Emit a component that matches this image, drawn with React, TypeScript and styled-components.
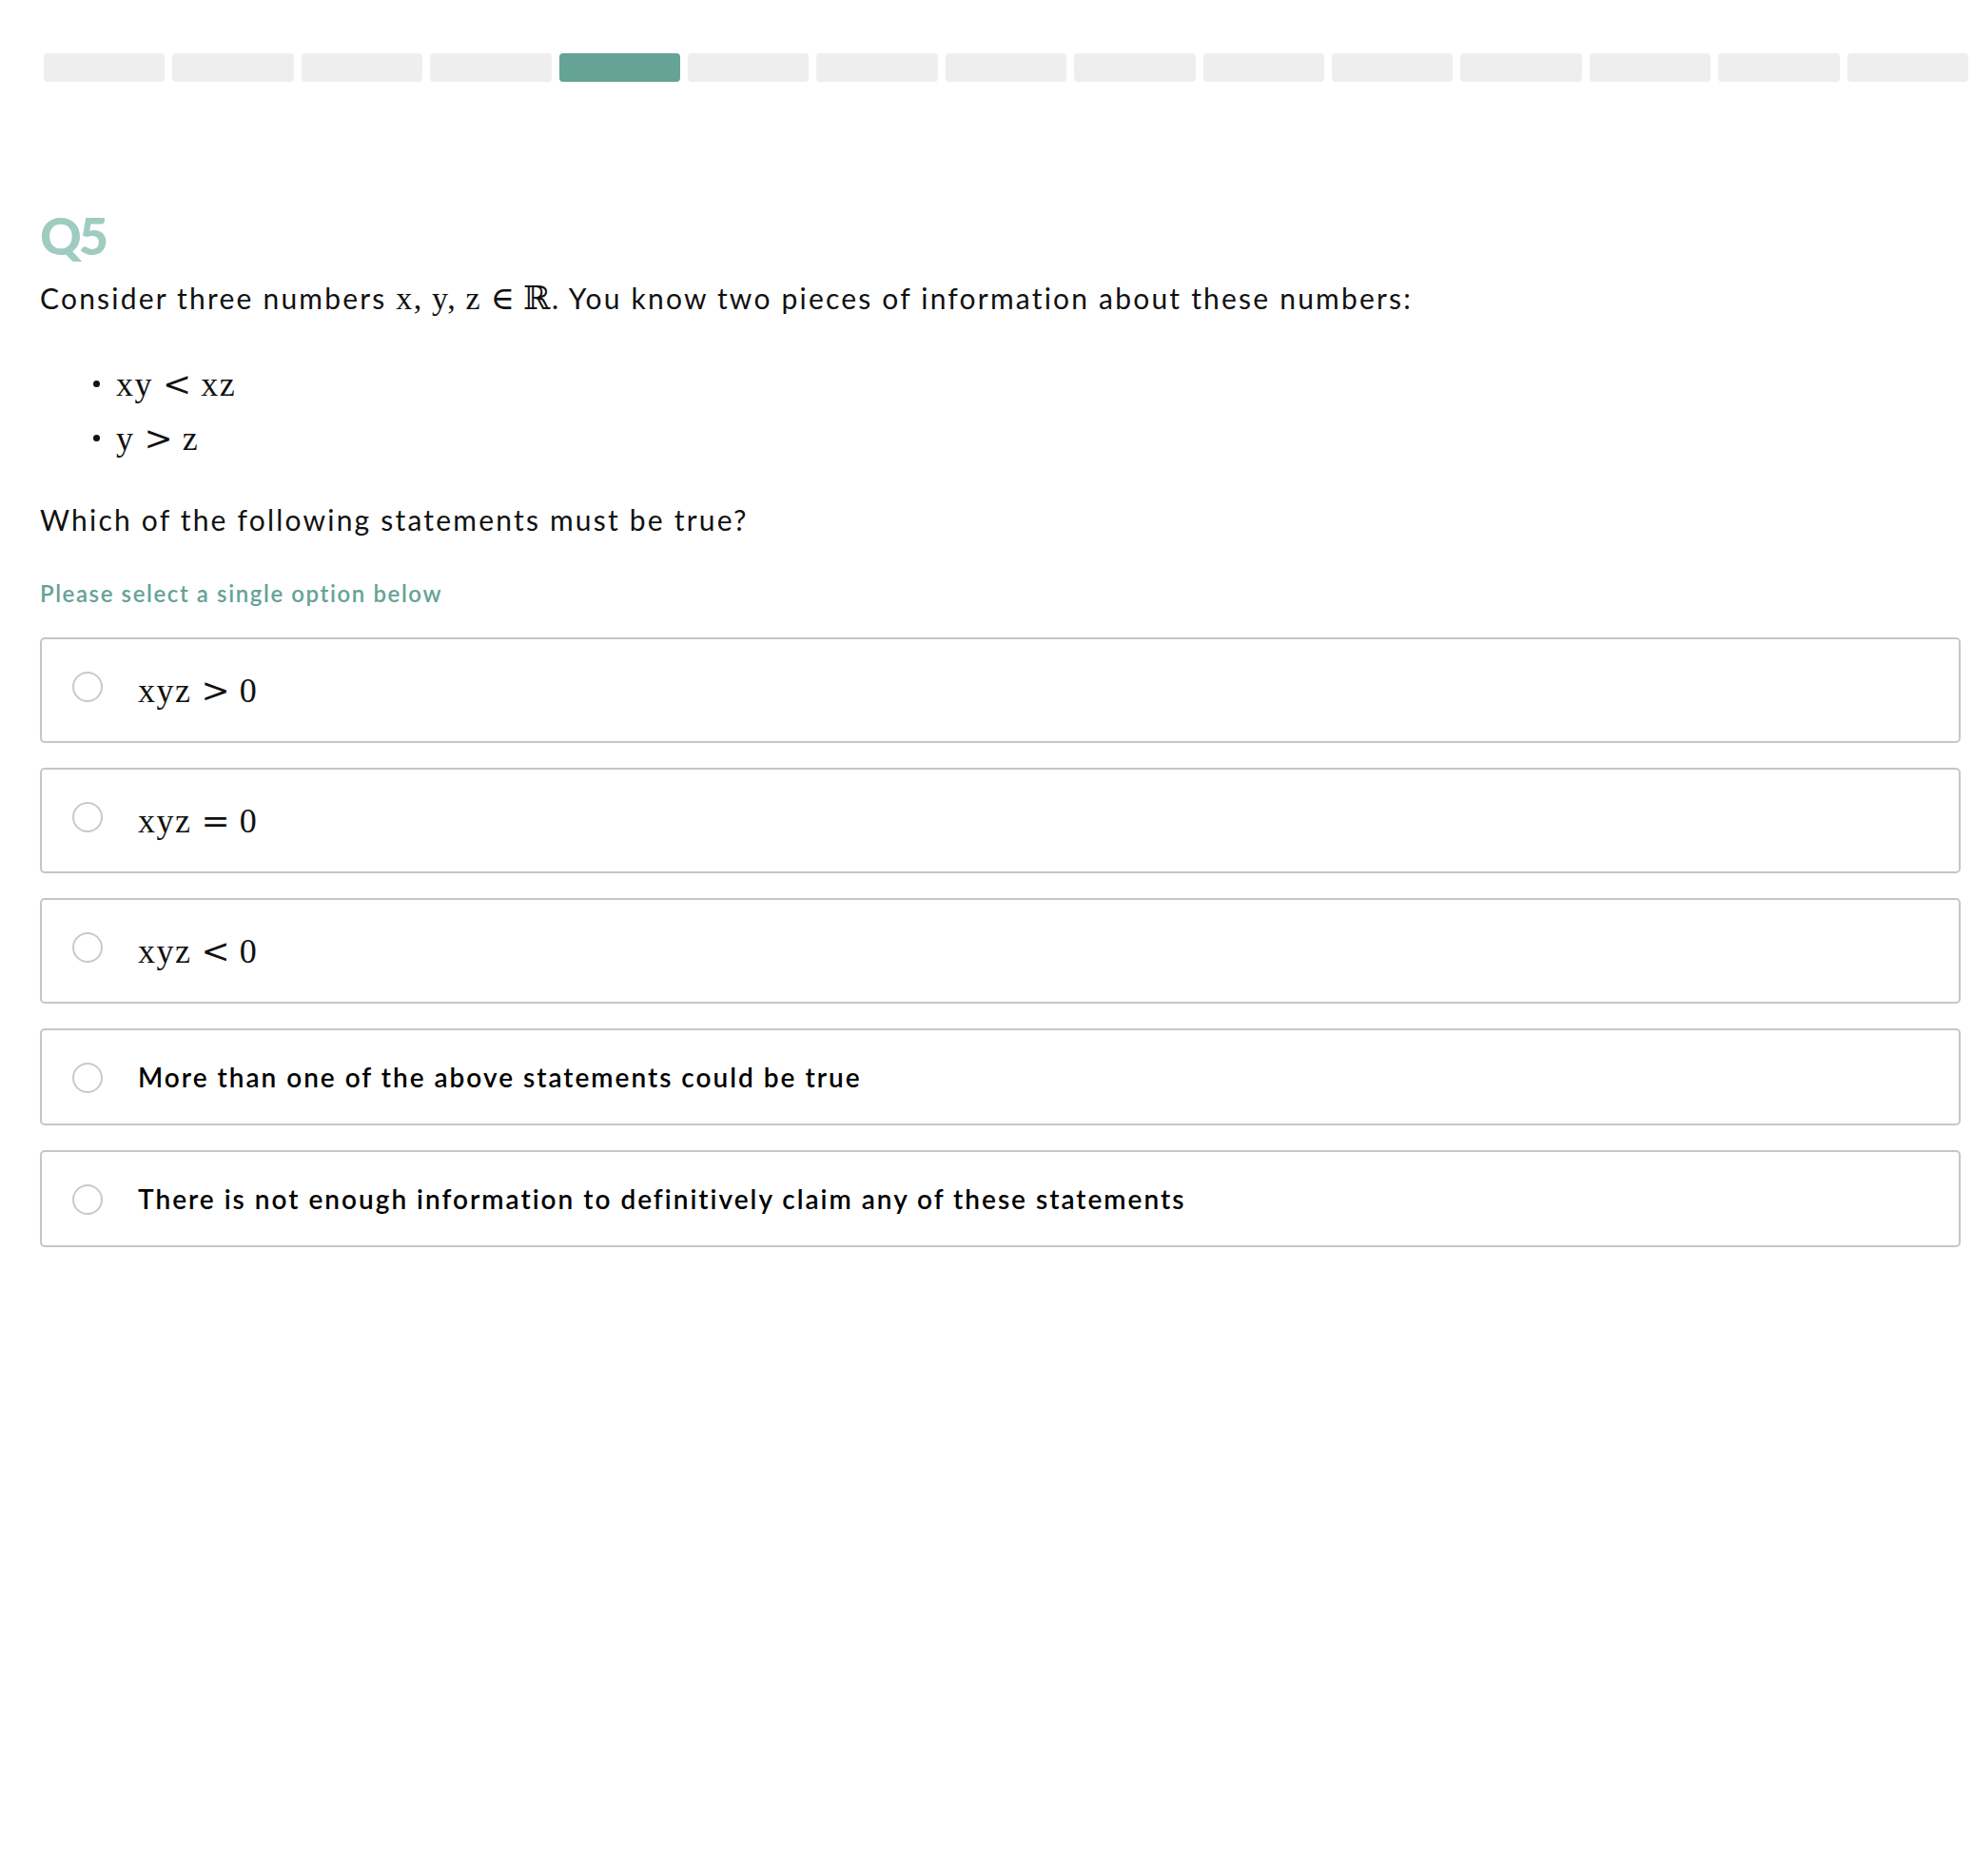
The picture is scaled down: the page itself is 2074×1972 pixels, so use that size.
import React from "react";
import styled, { createGlobalStyle } from "styled-components";

const GlobalStyle = createGlobalStyle`
  html, body { margin: 0; padding: 0; background: #ffffff; }
  body { font-family: Lato, "Open Sans", sans-serif; color: #111111; }
  * { box-sizing: border-box; }
`;

const Page = styled.div`
  width: 2074px;
  min-height: 1972px;
  padding: 56px 13px 0 42px;
  display: flex;
  flex-direction: column;
`;

const Progress = styled.div`
  display: flex;
  gap: 8px;
  margin: 0 -8px 0 4px;
`;

const Segment = styled.div<{ $active?: boolean }>`
  flex: 1;
  height: 30px;
  border-radius: 4px;
  background: ${(p) => (p.$active ? "#64a396" : "#eeeeee")};
`;

const QNumber = styled.h1`
  margin: 135px 0 0 0;
  font-family: Lato, sans-serif;
  font-weight: 900;
  font-size: 54px;
  line-height: 54px;
  color: #a0cbc1;
  letter-spacing: -3px;
`;

const Paragraph = styled.p`
  margin: 16px 0 0 0;
  font-size: 30px;
  line-height: 45px;
  letter-spacing: 2.2px;
  color: #111111;
`;

const Math = styled.span<{ $size?: number }>`
  font-family: "Liberation Serif", "DejaVu Serif", serif;
  font-size: ${(p) => p.$size ?? 36}px;
  letter-spacing: 0.04em;
  white-space: nowrap;
`;

const Rel = styled.span`
  font-family: "DejaVu Serif", serif;
  margin: 0 0.28em;
  letter-spacing: 0;
`;

const Sym = styled.span`
  font-family: "DejaVu Serif", serif;
  letter-spacing: 0;
  margin: 0 0.14em;
`;

const Conditions = styled.ul`
  list-style: none;
  margin: 39px 0 0 0;
  padding: 0 0 0 56px;
`;

const Condition = styled.li`
  display: flex;
  align-items: center;
  height: 57px;
  gap: 17px;
  &::before {
    content: "";
    width: 7px;
    height: 7px;
    border-radius: 50%;
    background: #111111;
    flex: none;
  }
`;

const Prompt = styled.p`
  margin: 35px 0 0 0;
  font-size: 30px;
  line-height: 45px;
  letter-spacing: 2.2px;
  color: #111111;
`;

const Hint = styled.p`
  margin: 37px 0 0 0;
  font-size: 24px;
  line-height: 36px;
  font-weight: 600;
  color: #64a396;
  letter-spacing: 1.6px;
`;

const Options = styled.div`
  margin-top: 28px;
  display: flex;
  flex-direction: column;
  gap: 26px;
`;

const Option = styled.label`
  display: flex;
  align-items: flex-start;
  gap: 37px;
  padding: 32px 32px;
  border: 2px solid #c6c6c6;
  border-radius: 5px;
  background: #ffffff;
  cursor: pointer;
`;

const Radio = styled.span`
  flex: none;
  width: 32px;
  height: 32px;
  margin-top: 2px;
  border-radius: 50%;
  border: 2px solid #c9c9c9;
  background: #ffffff;
`;

const MathLabel = styled.span`
  line-height: 43px;
  height: 43px;
  display: flex;
  align-items: center;
  color: #111111;
`;

const TextLabel = styled.span`
  font-size: 28px;
  line-height: 34px;
  font-weight: 600;
  color: #000000;
  letter-spacing: 2px;
`;

const segments = Array.from({ length: 15 }, (_, i) => i);

const mathOptions: [string, string][] = [
  ["xyz", ">"],
  ["xyz", "="],
  ["xyz", "<"],
];

export default function App() {
  return (
    <>
      <GlobalStyle />
      <Page>
        <Progress>
          {segments.map((i) => (
            <Segment key={i} $active={i === 4} />
          ))}
        </Progress>
        <QNumber>Q5</QNumber>
        <Paragraph>
          Consider three numbers{" "}
          <Math $size={34}>
            x,<Sym />y,<Sym />z<Rel>∈</Rel>ℝ
          </Math>
          . You know two pieces of information about these numbers:
        </Paragraph>
        <Conditions>
          <Condition>
            <Math>
              xy<Rel>&lt;</Rel>xz
            </Math>
          </Condition>
          <Condition>
            <Math>
              y<Rel>&gt;</Rel>z
            </Math>
          </Condition>
        </Conditions>
        <Prompt>Which of the following statements must be true?</Prompt>
        <Hint>Please select a single option below</Hint>
        <Options>
          {mathOptions.map(([lhs, op]) => (
            <Option key={op}>
              <Radio />
              <MathLabel>
                <Math>
                  {lhs}
                  <Rel>{op}</Rel>0
                </Math>
              </MathLabel>
            </Option>
          ))}
          <Option>
            <Radio />
            <TextLabel>More than one of the above statements could be true</TextLabel>
          </Option>
          <Option>
            <Radio />
            <TextLabel>
              There is not enough information to definitively claim any of these statements
            </TextLabel>
          </Option>
        </Options>
      </Page>
    </>
  );
}
